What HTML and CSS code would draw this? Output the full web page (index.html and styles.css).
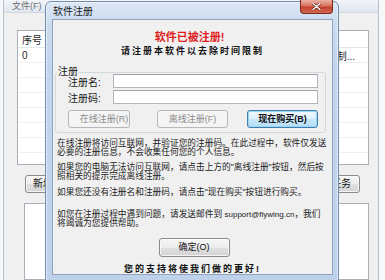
FILE: index.html
```html
<!DOCTYPE html>
<html lang="zh-CN">
<head>
<meta charset="utf-8">
<title>软件注册</title>
<link rel="stylesheet" href="styles.css">
</head>
<body>
<div class="app">
  <div class="window">
    <div class="menubar"><span class="menu-item">文件(F)</span></div>
    <div class="list">
      <div class="list-head"><span class="col-no">序号</span></div>
      <div class="list-row"><span class="col-no">0</span><span class="col-desc">制...</span></div>
      <div class="list-row"></div>
      <div class="list-row"></div>
      <div class="list-row"></div>
      <div class="list-row"></div>
      <div class="list-row"></div>
      <div class="list-row"></div>
      <div class="list-row"></div>
    </div>
    <div class="actions">
      <button class="btn btn-left">新增</button>
      <button class="btn btn-right">任务</button>
    </div>
    <div class="panel"></div>
  </div>

  <div class="dialog">
    <div class="titlebar">
      <span class="title">软件注册</span>
      <div class="close"><svg width="9" height="7" viewBox="0 0 9 7"><path d="M1 0.5 L8 6.5 M8 0.5 L1 6.5" stroke="#5a1a12" stroke-width="2.6" stroke-linecap="round"/><path d="M1 0.5 L8 6.5 M8 0.5 L1 6.5" stroke="#ffffff" stroke-width="1.4" stroke-linecap="round"/></svg></div>
    </div>
    <div class="client">
      <div class="reg-done">软件已被注册!</div>
      <div class="reg-hint">请注册本软件以去除时间限制</div>
      <div class="group">
        <span class="group-label">注册</span>
        <div class="field"><label class="field-label">注册名:</label><div class="input"></div></div>
        <div class="field field-2"><label class="field-label">注册码:</label><div class="input"></div></div>
        <div class="btn-row">
          <button class="btn btn-online" disabled>在线注册(R)</button>
          <button class="btn btn-offline" disabled>离线注册(F)</button>
          <button class="btn btn-buy">现在购买(B)</button>
        </div>
      </div>
      <div class="info">
        <p class="p1">在线注册将访问互联网，并验证您的注册码。在此过程中，软件仅发送<br>必要的注册信息，不会收集任何您的个人信息。</p>
        <p class="p2">如果您的电脑无法访问互联网，请点击上方的"离线注册"按钮，然后按<br>照相关的提示完成离线注册。</p>
        <p class="p3">如果您还没有注册名和注册码，请点击"现在购买"按钮进行购买。</p>
        <p class="p4">如您在注册过程中遇到问题，请发送邮件到 <span class="mail">support@flywing.cn</span>，我们<br>将竭诚为您提供帮助。</p>
      </div>
      <button class="btn btn-ok">确定(O)</button>
      <div class="thanks">您的支持将使我们做的更好!</div>
    </div>
  </div>
</div>
</body>
</html>
```

FILE: styles.css
```css
* { box-sizing: border-box; }

body {
  margin: 0;
  width: 385px;
  height: 280px;
  overflow: hidden;
  font-family: "Liberation Sans", "Noto Sans CJK SC", sans-serif;
  color: #111;
}

.app {
  position: relative;
  width: 385px;
  height: 280px;
  background: #f7f8f9;
  overflow: hidden;
}

/* background main window */
.window {
  margin-left: 3px;
  width: 376px;
  height: 280px;
  border-left: 1px solid #b8c0ca;
  border-right: 1px solid #b8c0ca;
  background: #f0f0f0;
  display: flex;
  flex-direction: column;
}

.menubar {
  height: 13px;
  background: linear-gradient(#f2f5f9, #dfe7f0);
  border-bottom: 1px solid #d0d8e2;
  padding-left: 8px;
  font-size: 9px;
  line-height: 12px;
  color: #707070;
}

.list {
  margin: 17px 0 0 13px;
  width: 352px;
  height: 135px;
  border: 1px solid #a9b0ba;
  background: #fff;
  overflow: hidden;
}

.list-head {
  height: 17px;
  border-bottom: 1px solid #e2e5e9;
  display: flex;
  align-items: center;
  padding-left: 4px;
  font-size: 10px;
  color: #1e1e1e;
}

.list-row {
  height: 15px;
  border-bottom: 1px solid #eef0f2;
  display: flex;
  align-items: center;
  padding-left: 4px;
  font-size: 10px;
  color: #1e1e1e;
}

.col-desc {
  margin-left: auto;
  margin-right: 13px;
}

.actions {
  display: flex;
  justify-content: space-between;
  margin: 10px 0 0 21px;
  width: 335px;
}

.panel {
  margin: 10px 0 0 20px;
  width: 345px;
  flex: 1;
  background: #fff;
  border: 1px solid #a9b0ba;
}

/* buttons */
.btn {
  font-family: inherit;
  font-size: 9px;
  color: #111;
  padding: 0;
  border: 1px solid #8a8a8a;
  border-radius: 3px;
  background: linear-gradient(#f6f6f6 0%, #ececec 50%, #e0e0e0 51%, #d4d4d4 100%);
  box-shadow: inset 0 0 0 1px rgba(255, 255, 255, 0.7);
  line-height: 1;
}

.btn:disabled {
  color: #8c8c8c;
  border-color: #b5b9bc;
  background: #f4f4f4;
  box-shadow: none;
}

.btn-left {
  width: 70px;
  height: 18px;
  text-align: left;
  padding-left: 7px;
  font-size: 10px;
}

.btn-right {
  width: 70px;
  height: 18px;
  text-align: right;
  padding-right: 8px;
  font-size: 10px;
}

/* dialog */
.dialog {
  position: absolute;
  left: 45px;
  top: 1px;
  width: 294px;
  height: 292px;
  border: 1px solid #7189aa;
  border-radius: 6px 6px 0 0;
  background: linear-gradient(#dde8f5 0px, #cddcef 18px, #c3d5ec 60px, #bdd1ea 100%);
  box-shadow: inset 0 0 0 1px rgba(255, 255, 255, 0.55);
  padding: 0 5px 0 6px;
}

.titlebar {
  height: 17px;
  display: flex;
  align-items: center;
  padding-left: 1px;
}

.title {
  font-size: 10px;
  color: #1c1c1c;
}

.close {
  position: absolute;
  left: 254px;
  top: -2px;
  width: 33px;
  height: 14px;
  border: 1px solid #7d2a20;
  border-top: none;
  border-radius: 0 0 4px 4px;
  background: linear-gradient(#eab0a2 0%, #d9735f 45%, #c4402e 55%, #d06a52 100%);
  display: flex;
  align-items: center;
  justify-content: center;
}

.client {
  width: 281px;
  height: 256px;
  border: 1px solid #8fa4c0;
  background: #f0f0f0;
  display: flex;
  flex-direction: column;
}

.reg-done {
  margin-top: 11px;
  font-size: 11px;
  line-height: 13px;
  font-weight: bold;
  color: #e21c1c;
  text-align: center;
  padding-right: 6px;
}

.reg-hint {
  margin-top: 2px;
  font-size: 9px;
  line-height: 11px;
  font-weight: bold;
  letter-spacing: 2px;
  text-align: center;
  color: #111;
}

.group {
  position: relative;
  margin: 15px 0 0 2px;
  width: 271px;
  border: 1px solid #d3d8dd;
  border-radius: 3px;
  padding: 1px 0 4px 0;
}

.group-label {
  position: absolute;
  top: -6px;
  left: 1px;
  padding: 0 1px;
  background: #f0f0f0;
  font-size: 10px;
  line-height: 10px;
  color: #1a1a1a;
}

.field {
  display: flex;
  align-items: center;
  height: 14px;
  padding-left: 12px;
}

.field-2 {
  margin-top: 2px;
}

.field-label {
  width: 45px;
  font-size: 10px;
  color: #1a1a1a;
}

.input {
  width: 205px;
  height: 14px;
  background: #fff;
  border: 1px solid #b3b7bd;
  border-top-color: #a0a4aa;
}

.btn-row {
  display: flex;
  margin-top: 6px;
  padding-left: 12px;
}

.btn-row .btn {
  height: 18px;
}

.btn-online {
  width: 62px;
  padding-left: 10px;
}

.btn-offline {
  width: 71px;
  margin-left: 27px;
}

.btn-buy {
  width: 71px;
  margin-left: 19px;
  font-weight: bold;
  border-color: #3c7fb1;
  background: linear-gradient(#eef7fd 0%, #dff1fc 50%, #c7e8fb 51%, #b3def6 100%);
  box-shadow: inset 0 0 0 1px #9fd4f3;
}

.info {
  margin-left: 4px;
  font-size: 8.7px;
  line-height: 9px;
  color: #222;
  white-space: nowrap;
}

.info p {
  margin: 0;
}

.info .p1 { margin-top: 6px; }
.info .p2 { margin-top: 6px; }
.info .p3 { margin-top: 7px; }
.info .p4 { margin-top: 13px; }

.mail {
  font-size: 8px;
}

.btn-ok {
  align-self: center;
  margin-top: 10px;
  width: 71px;
  height: 19px;
  margin-left: 3px;
}

.thanks {
  margin-top: 7px;
  font-size: 9px;
  line-height: 10px;
  font-weight: bold;
  letter-spacing: 2px;
  text-align: center;
  color: #111;
}
```
